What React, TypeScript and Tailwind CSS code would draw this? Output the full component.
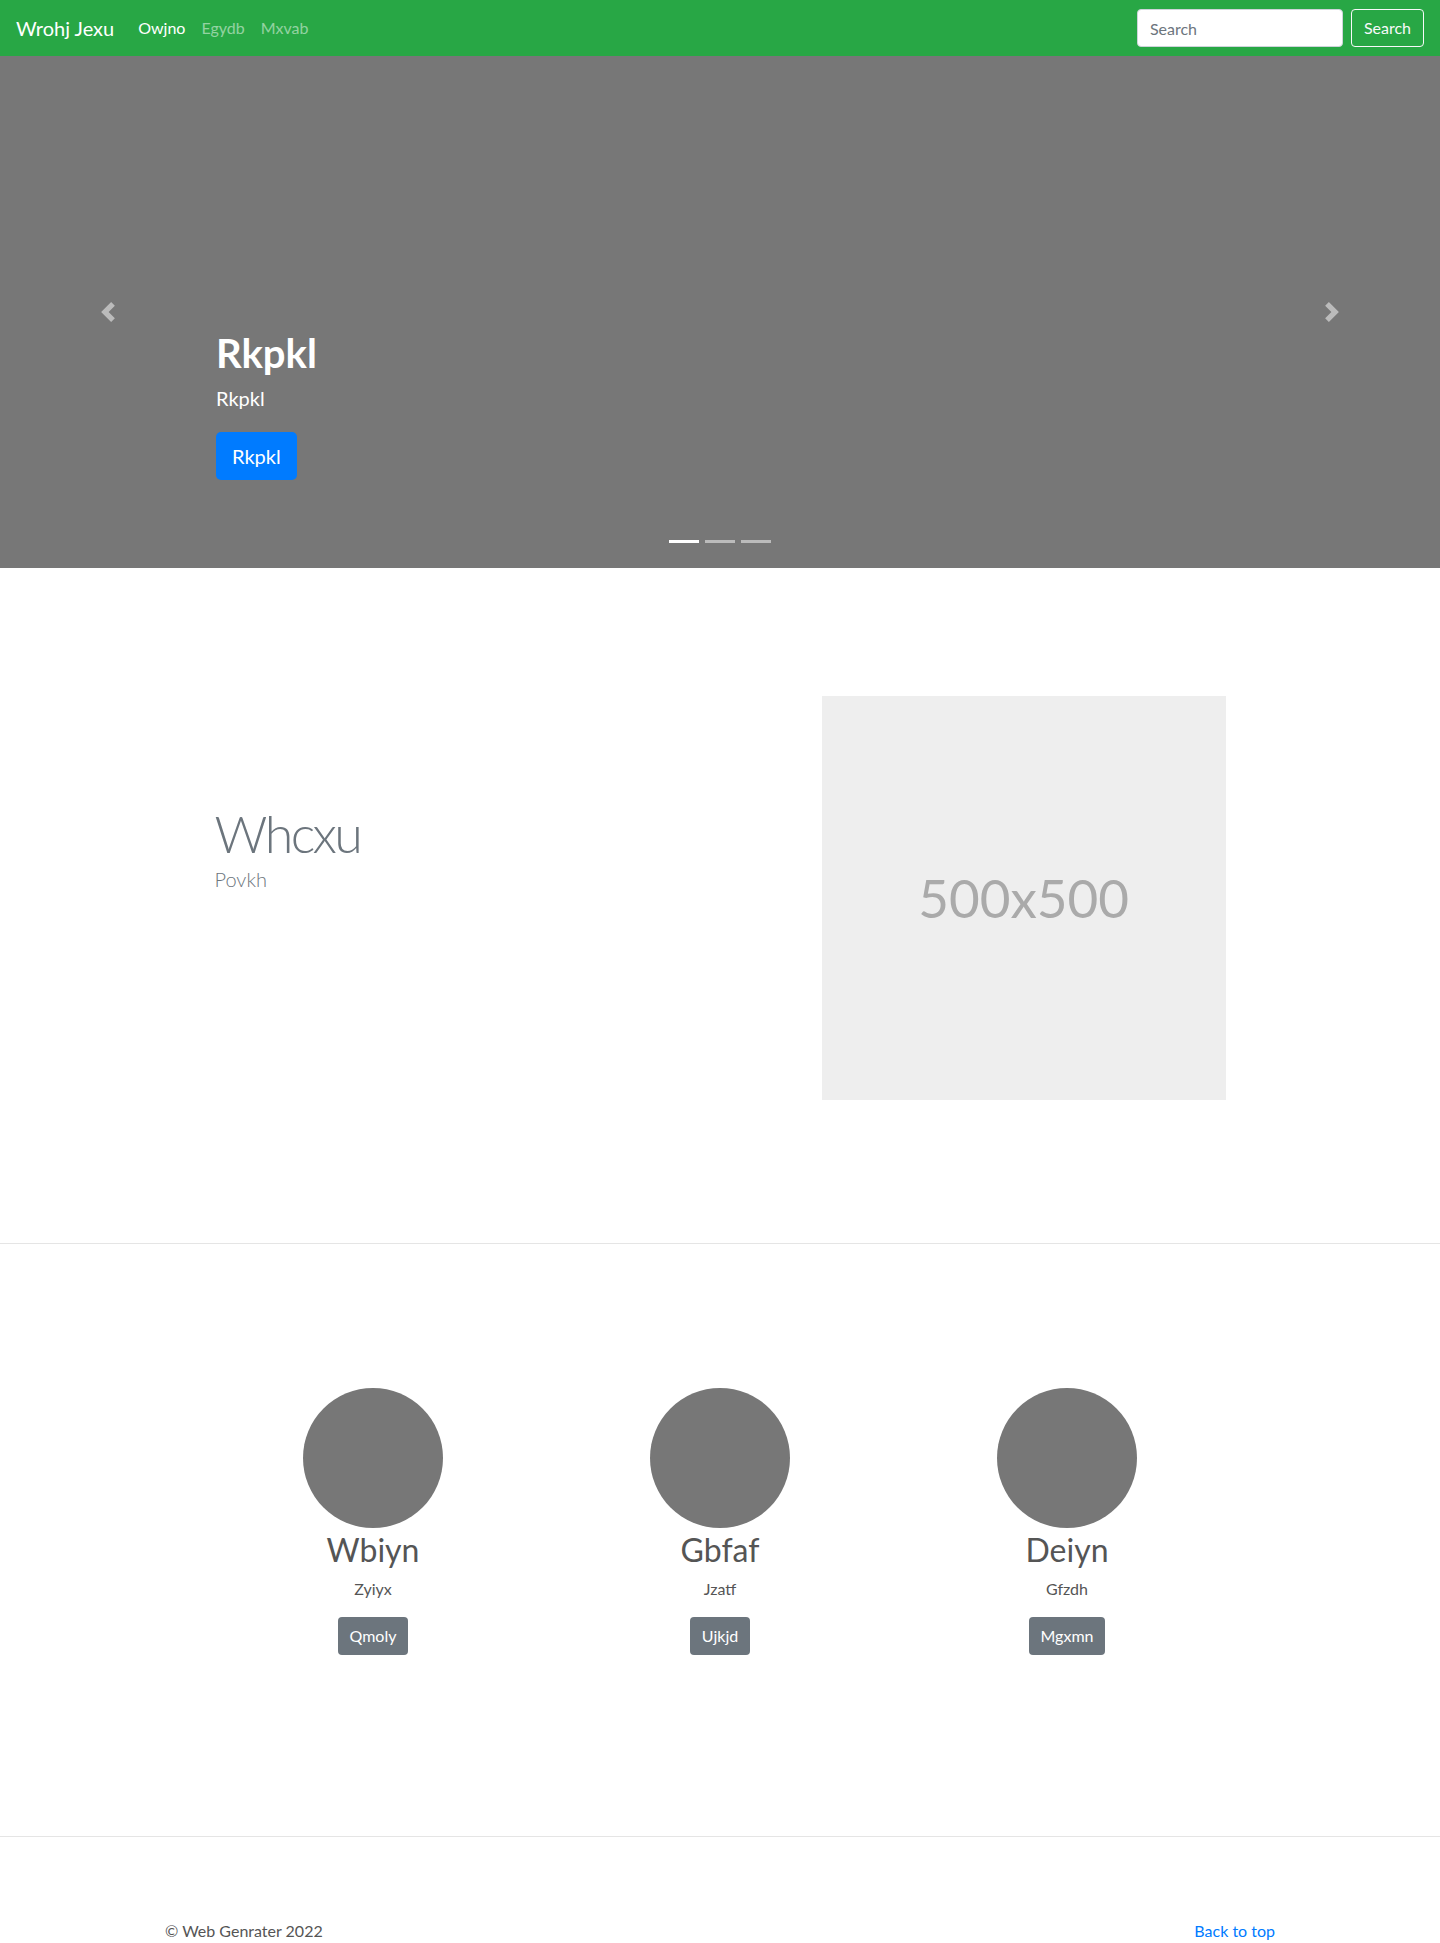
const font = { fontFamily: 'Lato, "Open Sans", "Noto Sans", sans-serif' };

function Prev() {
  return (
    <svg viewBox="0 0 8 8" className="h-5 w-5" fill="#fff">
      <path d="M5.25 0l-4 4 4 4 1.5-1.5L4.25 4l2.5-2.5L5.25 0z" />
    </svg>
  );
}

function Next() {
  return (
    <svg viewBox="0 0 8 8" className="h-5 w-5" fill="#fff">
      <path d="M2.75 0l-1.5 1.5L3.75 4l-2.5 2.5L2.75 8l4-4-4-4z" />
    </svg>
  );
}

const people = [
  { name: "Wbiyn", sub: "Zyiyx", btn: "Qmoly" },
  { name: "Gbfaf", sub: "Jzatf", btn: "Ujkjd" },
  { name: "Deiyn", sub: "Gfzdh", btn: "Mgxmn" },
];

export default function App() {
  return (
    <div className="min-h-screen bg-white text-[#212529]" style={font}>
      {/* navbar */}
      <nav className="flex h-14 items-center bg-[#28a745] px-4">
        <a className="mr-4 text-[20px] leading-[30px] text-white">Wrohj Jexu</a>
        <div className="flex text-base">
          <a className="px-2 text-white">Owjno</a>
          <a className="px-2 text-white/50">Egydb</a>
          <a className="px-2 text-white/50">Mxvab</a>
        </div>
        <div className="ml-auto flex items-center">
          <input
            placeholder="Search"
            className="mr-2 h-[38px] w-[206px] rounded border border-[#ced4da] bg-white px-3 text-base text-[#495057] placeholder:text-[#6c757d]"
          />
          <button className="h-[38px] rounded border border-[#f8f9fa] px-3 text-base text-[#f8f9fa]">
            Search
          </button>
        </div>
      </nav>

      {/* carousel */}
      <div className="relative flex h-[512px] flex-col justify-end bg-[#777] px-[15%] pb-[88px]">
        <div className="absolute left-0 top-0 flex h-full w-[15%] items-center justify-center opacity-50">
          <Prev />
        </div>
        <div className="absolute right-0 top-0 flex h-full w-[15%] items-center justify-center opacity-50">
          <Next />
        </div>
        <h1 className="mb-[6px] text-[40px] font-bold leading-[48px] text-white">Rkpkl</h1>
        <p className="mb-[19px] text-[20px] leading-[30px] text-white">Rkpkl</p>
        <div>
          <button className="h-12 rounded-[5px] bg-[#007bff] px-4 text-[20px] text-white">Rkpkl</button>
        </div>
        <div className="absolute bottom-[25px] left-0 flex w-full justify-center gap-[6px]">
          <span className="h-[3px] w-[30px] bg-white" />
          <span className="h-[3px] w-[30px] bg-white/50" />
          <span className="h-[3px] w-[30px] bg-white/50" />
        </div>
      </div>

      {/* featurette */}
      <section className="pb-[143px] pt-[128px]">
        <div className="mx-auto flex w-[1041px]">
          <div className="w-7/12 px-[15px] pt-[106px]">
            <h2 className="text-[52px] font-light leading-[1.2] tracking-[-0.05em] text-[#6c757d]">Whcxu</h2>
            <p className="text-[20px] font-light leading-[30px] text-[#6c757d]">Povkh</p>
          </div>
          <div className="w-5/12 px-[15px]">
            <div className="flex aspect-square w-full items-center justify-center bg-[#eee] text-[53px] text-[#aaa]">
              500x500
            </div>
          </div>
        </div>
      </section>

      <hr className="border-t border-black/10" />

      {/* circles */}
      <section className="pb-[181px] pt-[144px]">
        <div className="mx-auto grid w-[1041px] grid-cols-3">
          {people.map((p) => (
            <div key={p.name} className="flex flex-col items-center px-[15px] text-center">
              <div className="h-[140px] w-[140px] rounded-full bg-[#777]" />
              <h2 className="mb-2 mt-[3px] text-[32px] leading-[1.2] text-[#555]">{p.name}</h2>
              <p className="mb-4 text-base leading-6 text-[#555]">{p.sub}</p>
              <button className="h-[38px] rounded bg-[#6c757d] px-3 text-base text-white">{p.btn}</button>
            </div>
          ))}
        </div>
      </section>

      <hr className="border-t border-black/10" />

      <footer className="mx-auto flex w-[1140px] justify-between px-[15px] pb-4 pt-[82px] text-base leading-6">
        <p className="text-[#555]">© Web Genrater 2022</p>
        <a className="text-[#007bff]">Back to top</a>
      </footer>
    </div>
  );
}
